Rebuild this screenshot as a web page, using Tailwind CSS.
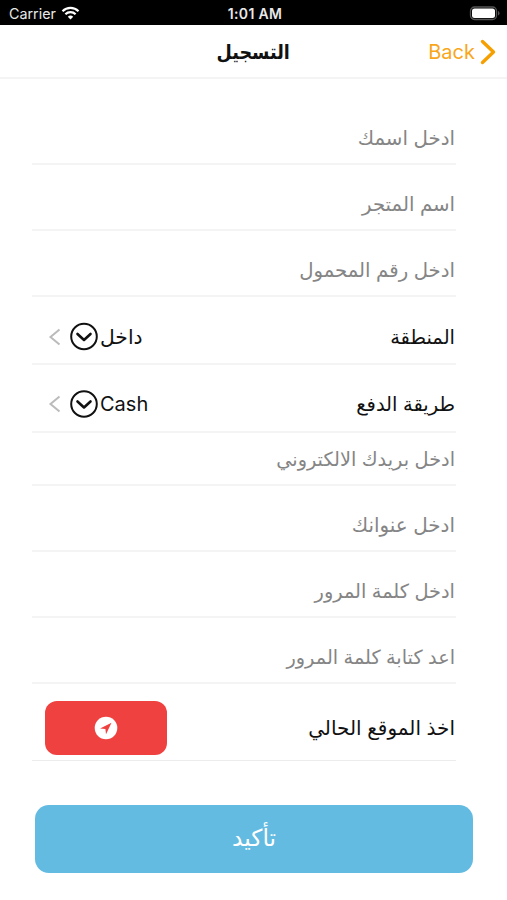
<!DOCTYPE html>
<html lang="ar">
<head>
<meta charset="utf-8">
<title>التسجيل</title>
<script src="https://cdn.jsdelivr.net/npm/@tailwindcss/browser@4"></script>
</head>
<body class="bg-white">
<div class="w-[507px] h-[900px] overflow-hidden flex flex-col bg-white font-['Inter','DejaVu_Sans',sans-serif] text-[19.5px] leading-6 text-[#111]">
  <div class="h-[25px] shrink-0 bg-black text-[#e8e8e8] grid grid-cols-3 items-center pl-[9px] pr-[7px] pt-[2px] text-[14.3px]">
    <div class="flex items-center gap-[5px]"><span>Carrier</span>
      <svg class="-mt-[2px]" width="19" height="14" viewBox="0 0 18 14" fill="none" stroke="#fff" stroke-width="2.200"><path d="M1 5.200a11.500 11.500 0 0 1 16 0M3.900 8.300a7.200 7.200 0 0 1 10.200 0"/><path d="M9 13.500 6.300 10.800a3.800 3.800 0 0 1 5.400 0z" fill="#fff" stroke="none"/></svg>
    </div>
    <div class="text-center font-semibold text-[14px] tracking-[0.3px] -mr-[1px]">1:01 AM</div>
    <div class="flex justify-end -mt-[2px]">
      <svg width="31" height="15" viewBox="0 0 31 15"><rect x="1.500" y="1" width="26" height="12.500" rx="4" fill="none" stroke="#555" stroke-width="1.300"/><rect x="3" y="2.500" width="23" height="9.500" rx="2.500" fill="#fff"/><path d="M29 5v4.500q1.500-.5 1.500-2.250T29 5z" fill="#555"/></svg>
    </div>
  </div>
  <header class="h-[54px] shrink-0 border-b-2 border-[#f4f4f4] grid grid-cols-3 items-center pr-[11px] pt-[2px]">
    <div></div>
    <h1 class="text-center font-bold text-[20px] text-[#111] scale-x-[0.88] ml-[11px]" dir="rtl">التسجيل</h1>
    <div class="flex items-center justify-end gap-[5px] text-[20px] text-[#f9a61a]"><span>Back</span>
      <svg width="16" height="26" viewBox="0 0 16 26" fill="none" stroke="#f5a000" stroke-width="3.400" stroke-linecap="round" stroke-linejoin="round"><path d="m2.500 2.500 11 10.500-11 10.500"/></svg>
    </div>
  </header>
  <main class="pl-[32px] pr-[51px] flex flex-col" dir="rtl">
    <div class="h-[86px] border-b-2 border-[#f4f4f4] flex items-end pb-[13px] pr-[1px] text-[#858585] text-[19.8px]"><span>ادخل اسمك</span></div>
    <div class="h-[66px] border-b-2 border-[#f4f4f4] flex items-end pb-[13px] pr-[1px] text-[#858585] text-[19.7px]"><span>اسم المتجر</span></div>
    <div class="h-[66px] border-b-2 border-[#f4f4f4] flex items-end pb-[13px] pr-[1px] text-[#858585] text-[19.7px]"><span>ادخل رقم المحمول</span></div>
    <div class="h-[68px] border-b-2 border-[#f4f4f4] flex items-center justify-between pl-[16px] pr-[1px] pt-[13px]"><span>المنطقة</span>
      <div class="flex items-center"><span class="text-[20.3px]">داخل</span>
        <svg class="ml-[8px] mr-[1px]" width="30" height="30" viewBox="0 0 30 30" fill="none" stroke="#111" stroke-width="2"><circle cx="15" cy="14.500" r="12.800"/><path d="m8.500 12 6.500 6 6.500-6" stroke-width="2.600" stroke-linecap="round" stroke-linejoin="round"/></svg>
        <svg width="13" height="18" viewBox="0 0 13 18" fill="none" stroke="#bbb" stroke-width="2"><path d="M11.500 1.500 2.500 9l9 7.500"/></svg>
      </div>
    </div>
    <div class="h-[68px] border-b-2 border-[#f4f4f4] flex items-center justify-between pl-[16px] pr-[1px] pt-[11px]"><span>طريقة الدفع</span>
      <div class="flex items-center"><span class="text-[20px]">Cash</span>
        <svg class="ml-[8px] mr-[1px]" width="30" height="30" viewBox="0 0 30 30" fill="none" stroke="#111" stroke-width="2"><circle cx="15" cy="15" r="12.800"/><path d="m8.500 12.500 6.500 6 6.500-6" stroke-width="2.600" stroke-linecap="round" stroke-linejoin="round"/></svg>
        <svg width="13" height="18" viewBox="0 0 13 18" fill="none" stroke="#bbb" stroke-width="2"><path d="M11.500 1.500 2.500 9l9 7.500"/></svg>
      </div>
    </div>
    <div class="h-[53px] border-b-2 border-[#f4f4f4] flex items-end pb-[13px] pr-[1px] text-[#858585] text-[19.3px]"><span>ادخل بريدك الالكتروني</span></div>
    <div class="h-[66px] border-b-2 border-[#f4f4f4] flex items-end pb-[13px] pr-[1px] text-[#858585] text-[19.9px]"><span>ادخل عنوانك</span></div>
    <div class="h-[66px] border-b-2 border-[#f4f4f4] flex items-end pb-[13px] pr-[1px] text-[#858585] text-[19.35px]"><span>ادخل كلمة المرور</span></div>
    <div class="h-[66px] border-b-2 border-[#f4f4f4] flex items-end pb-[13px] pr-[1px] text-[#858585] text-[19.3px]"><span>اعد كتابة كلمة المرور</span></div>
    <div class="h-[77px] border-b border-[#ececec] flex items-center justify-between pl-[13px] pr-[1px] pt-[12px]"><span class="text-[20px]">اخذ الموقع الحالي</span>
      <button class="w-[122px] h-[54px] rounded-[12px] bg-[#f04141] flex items-center justify-center">
        <svg width="24" height="24" viewBox="0 0 24 24"><circle cx="12" cy="12" r="11.300" fill="#fff"/><path d="M17.500 6.800 6 12.400l5.400.5.600 5.300z" fill="#f04141"/></svg>
      </button>
    </div>
  </main>
  <button class="mt-[44px] ml-[35px] w-[438px] h-[68px] shrink-0 rounded-[14px] bg-[#63bbe2] text-white text-[23.3px] pb-[3px]" dir="rtl">تأكيد</button>
</div>
</body>
</html>
